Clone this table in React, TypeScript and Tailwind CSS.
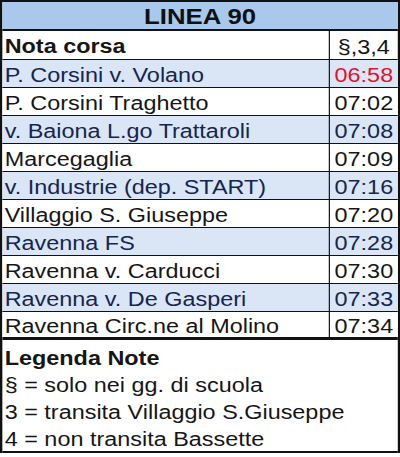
import React from 'react';

type Stop = { name: string; time: string; shaded: boolean; red?: boolean };

const STOPS: Stop[] = [
  { name: 'P. Corsini v. Volano', time: '06:58', shaded: true, red: true },
  { name: 'P. Corsini Traghetto', time: '07:02', shaded: false },
  { name: 'v. Baiona L.go Trattaroli', time: '07:08', shaded: true },
  { name: 'Marcegaglia', time: '07:09', shaded: false },
  { name: 'v. Industrie (dep. START)', time: '07:16', shaded: true },
  { name: 'Villaggio S. Giuseppe', time: '07:20', shaded: false },
  { name: 'Ravenna FS', time: '07:28', shaded: true },
  { name: 'Ravenna v. Carducci', time: '07:30', shaded: false },
  { name: 'Ravenna v. De Gasperi', time: '07:33', shaded: true },
  { name: 'Ravenna Circ.ne al Molino', time: '07:34', shaded: false },
];

const LEGEND = [
  '§ = solo nei gg. di scuola',
  '3 = transita Villaggio S.Giuseppe',
  '4 = non transita Bassette',
];

export default function App() {
  return (
    <div className="w-[400px] h-[457px] bg-white overflow-hidden font-['Liberation_Sans',Arial,sans-serif]">
      {/* the source image is stretched sideways, so the table is too */}
      <div className="w-[342px] origin-top-left scale-x-[1.17] border-x-2 border-t-2 border-[#111]">
        <div className="h-[29px] bg-[#a9c9ec] border-b-2 border-[#111] flex items-center justify-center text-[22px] font-bold text-[#111] leading-none pt-[2px]">
          LINEA 90
        </div>

        <div className="h-[29px] flex border-b border-[#111] text-[#161616]">
          <div className="flex-1 flex items-center pl-[2px] text-[20px] font-bold leading-none pt-[2px]">Nota corsa</div>
          <div className="w-[59px] border-l border-[#111] flex items-center justify-center text-[20px] leading-none pt-[4px]">§,3,4</div>
        </div>

        {STOPS.map((s, i) => (
          <div
            key={s.name}
            className={`h-[28px] flex ${i === STOPS.length - 1 ? 'border-b-[3px]' : 'border-b'} border-[#111] ${
              s.shaded ? 'bg-[#dae6f6] text-[#15254f]' : 'bg-white text-[#161616]'
            }`}
          >
            <div className="flex-1 flex items-center pl-[2px] text-[20px] leading-none pt-[3px] whitespace-nowrap">{s.name}</div>
            <div
              className={`w-[59px] border-l border-[#111] flex items-center justify-center text-[20px] leading-none pt-[3px] ${
                s.red ? 'text-[#e4102a]' : ''
              }`}
            >
              {s.time}
            </div>
          </div>
        ))}

        <div className="h-[113px] border-b-2 border-[#111] pl-[2px] pt-[5px] text-[#161616] text-[20px] leading-[27px]">
          <div className="font-bold">Legenda Note</div>
          {LEGEND.map((l) => (
            <div key={l} className="whitespace-nowrap">{l}</div>
          ))}
        </div>
      </div>
    </div>
  );
}
